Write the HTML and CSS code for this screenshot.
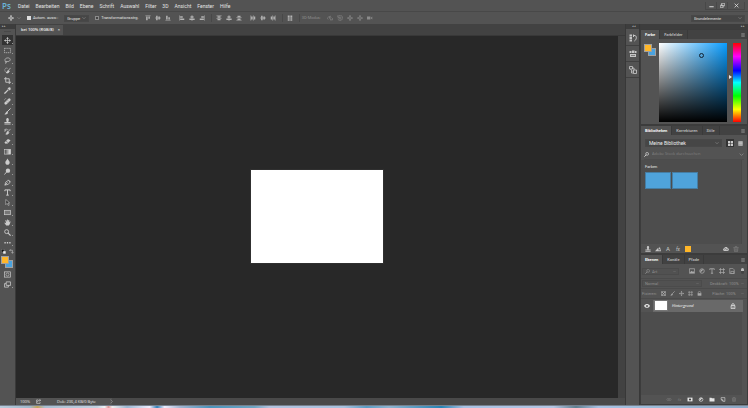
FILE: index.html
```html
<!DOCTYPE html>
<html lang="de">
<head>
<meta charset="utf-8">
<title>Ps</title>
<link rel="stylesheet" href="styles.css">
</head>
<body>
<svg class="sprite" aria-hidden="true">
  <symbol id="move" viewBox="0 0 16 16"><path d="M8 2v12M2 8h12" stroke="currentColor" stroke-width="1.6"/><path d="M8 0l3 4H5zM8 16l3-4H5zM0 8l4-3v6zM16 8l-4-3v6z" fill="currentColor"/></symbol>
  <symbol id="marquee" viewBox="0 0 16 16"><rect x="1" y="3" width="14" height="10" fill="none" stroke="currentColor" stroke-width="1.6" stroke-dasharray="3 1.6"/></symbol>
  <symbol id="lasso" viewBox="0 0 16 16"><path d="M4 10C0 7 3 2 9 2s7 6 2 8c-3 1-5 0-7 0s-2 3 1 2c1 1 0 3-2 3" fill="none" stroke="currentColor" stroke-width="1.6"/></symbol>
  <symbol id="quick" viewBox="0 0 16 16"><path d="M8 3C4 1 1 4 2 8s3 5 6 5" fill="none" stroke="currentColor" stroke-width="1.5" stroke-dasharray="2.5 1.3"/><path d="M15 2l-5 6M10 8c-3 0-2 4-5 5 3 2 7 0 7-4z" fill="currentColor" stroke="currentColor" stroke-width="1.6"/></symbol>
  <symbol id="crop" viewBox="0 0 16 16"><path d="M4 0v12h12M0 4h12v12" fill="none" stroke="currentColor" stroke-width="2"/></symbol>
  <symbol id="dropper" viewBox="0 0 16 16"><path d="M10 6l-7 7-2 2" stroke="currentColor" stroke-width="3"/><path d="M8 3l5 5 2-3c1-3-1-5-4-4z" fill="currentColor"/></symbol>
  <symbol id="heal" viewBox="0 0 16 16"><path d="M4 12l8-8" stroke="currentColor" stroke-width="6" stroke-linecap="round"/><path d="M5 8l3 3M8 5l3 3" stroke="#555" stroke-width="1"/><path d="M1 5c0-2 2-4 4-4" fill="none" stroke="currentColor"/></symbol>
  <symbol id="brush" viewBox="0 0 16 16"><path d="M15 1L7 9" stroke="currentColor" stroke-width="2.2"/><path d="M7 8c-3 0-2 4-6 6 4 2 8-1 8-4z" fill="currentColor"/></symbol>
  <symbol id="stamp" viewBox="0 0 16 16"><path d="M5 4c0-5 6-5 6 0 0 2-1 2-1 5h5v3H1V9h5c0-3-1-3-1-5zM1 13h14v2H1z" fill="currentColor"/></symbol>
  <symbol id="history" viewBox="0 0 16 16"><path d="M15 2L9 9M9 8c-3 0-2 4-5 6 4 1 7-1 7-4z" fill="currentColor" stroke="currentColor" stroke-width="1.6"/><path d="M2 9V4h8M5 7L2 4l3-3" fill="none" stroke="currentColor" stroke-width="1.4"/></symbol>
  <symbol id="eraser" viewBox="0 0 16 16"><path d="M9 2l6 3-7 8H3l-2-3z" fill="currentColor"/><path d="M4 7l6 4M3 14h12" stroke="#555" stroke-width="1.2"/></symbol>
  <symbol id="gradient" viewBox="0 0 16 16"><defs><linearGradient id="gr"><stop stop-color="#444"/><stop offset="1" stop-color="#eee"/></linearGradient></defs><rect x="1" y="3" width="14" height="11" fill="url(#gr)" stroke="currentColor" stroke-width="1.4"/></symbol>
  <symbol id="drop" viewBox="0 0 16 16"><path d="M8 1c2 4 5 6 5 9 0 7-10 7-10 0 0-3 3-5 5-9z" fill="currentColor"/></symbol>
  <symbol id="dodge" viewBox="0 0 16 16"><circle cx="9" cy="6" r="5" fill="currentColor"/><path d="M6 9l-5 6" stroke="currentColor" stroke-width="2"/></symbol>
  <symbol id="pen" viewBox="0 0 16 16"><path d="M2 14L4 7l6-4 4 4-4 5zM2 14l6-6M10 2l5 5" fill="none" stroke="currentColor" stroke-width="1.8"/></symbol>
  <symbol id="type" viewBox="0 0 16 16"><path d="M2 5V2h12v3M8 2v12M5 14h6" fill="none" stroke="currentColor" stroke-width="2.2"/></symbol>
  <symbol id="pointer" viewBox="0 0 16 16"><path d="M4 1v12l3-3 3 5 2-1-3-5h4z" fill="#333" stroke="currentColor" stroke-width="1.3"/></symbol>
  <symbol id="shape" viewBox="0 0 16 16"><rect x="1" y="3" width="14" height="10" fill="#777" stroke="currentColor" stroke-width="1.6"/></symbol>
  <symbol id="hand" viewBox="0 0 16 16"><path d="M5 15L1 9l1-1 3 2-2-7 2-1 2 5V1h2v6l1-5h2v6l2-3 1 1-2 6-2 3z" fill="currentColor"/></symbol>
  <symbol id="zoom" viewBox="0 0 16 16"><circle cx="6" cy="6" r="4.5" fill="none" stroke="currentColor" stroke-width="2"/><path d="M9 9l6 6" stroke="currentColor" stroke-width="2.6"/></symbol>
  <symbol id="dots" viewBox="0 0 16 16"><path d="M1 7h3v3H1zM6.500 7h3v3h-3zM12 7h3v3h-3z" fill="currentColor"/></symbol>
  <symbol id="mask" viewBox="0 0 16 16"><rect x="1" y="2" width="14" height="12" fill="none" stroke="currentColor" stroke-width="1.6"/><circle cx="8" cy="8" r="3.500" fill="none" stroke="currentColor" stroke-width="1.4"/></symbol>
  <symbol id="screens" viewBox="0 0 16 16"><path d="M5 2h10v8H5zM5 6H1v8h9v-4" fill="none" stroke="currentColor" stroke-width="1.8"/></symbol>
  <symbol id="chevron" viewBox="0 0 16 16"><path d="M2 5l6 6 6-6" fill="none" stroke="currentColor" stroke-width="2.4"/></symbol>
  <symbol id="al-top" viewBox="0 0 16 16"><path d="M1 2h14" stroke="currentColor" stroke-width="1.6"/><path d="M3 4h4v10H3zM9 4h4v6H9z" fill="currentColor"/></symbol>
  <symbol id="al-mid" viewBox="0 0 16 16"><path d="M0 8h16" stroke="currentColor" stroke-width="1.6"/><path d="M3 2h4v12H3zM9 4h4v8H9z" fill="currentColor"/></symbol>
  <symbol id="al-side" viewBox="0 0 16 16"><path d="M1 1v14" stroke="currentColor" stroke-width="1.6"/><path d="M3 3h7v4H3zM3 9h11v4H3z" fill="currentColor"/></symbol>
  <symbol id="al-center" viewBox="0 0 16 16"><path d="M8 0v16" stroke="currentColor" stroke-width="1.6"/><path d="M4 3h8v4H4zM1 9h14v4H1z" fill="currentColor"/></symbol>
  <symbol id="dist-h" viewBox="0 0 16 16"><path d="M2 1v14M9 1v14" stroke="currentColor" stroke-width="1.6"/><path d="M3 4h4v8H3zM10 4h4v8h-4z" fill="currentColor"/></symbol>
  <symbol id="dist-v" viewBox="0 0 16 16"><path d="M1 2h14M1 9h14" stroke="currentColor" stroke-width="1.6"/><path d="M4 3h8v4H4zM4 10h8v4H4z" fill="currentColor"/></symbol>
  <symbol id="grid" viewBox="0 0 16 16"><path d="M2 1h5v4H2zM9 1h5v4H9zM2 6h5v4H2zM9 6h5v4H9zM2 11h5v4H2zM9 11h5v4H9z" fill="currentColor"/></symbol>
  <symbol id="tiles" viewBox="0 0 16 16"><path d="M0 0h7v7H0zM9 0h7v7H9zM0 9h7v7H0zM9 9h7v7H9z" fill="currentColor"/></symbol>
  <symbol id="list" viewBox="0 0 16 16"><path d="M1 1h14v14H1z" fill="currentColor"/><path d="M1 6h14M1 11h14" stroke="#777" stroke-width="1.400"/></symbol>
  <symbol id="orbit" viewBox="0 0 16 16"><path d="M3 12C-1 8 3 4 8 5l4 2M10 3a4 4 0 1 0 1 8M8 13h7V8" fill="none" stroke="currentColor" stroke-width="1.6"/></symbol>
  <symbol id="roll" viewBox="0 0 16 16"><path d="M3 3a7 7 0 1 1-1 8M2 1v5h4" fill="none" stroke="currentColor" stroke-width="1.5"/><circle cx="8" cy="8" r="3" fill="none" stroke="currentColor" stroke-width="1.5"/></symbol>
  <symbol id="camera" viewBox="0 0 16 16"><path d="M0 4h9v8H0zM10 8l4-4v8z" fill="currentColor"/></symbol>
  <symbol id="versions" viewBox="0 0 16 16"><path d="M1 1h5v4H1zM1 6h5v4H1zM1 11h5v4H1z" fill="currentColor"/><path d="M9 3h3c5 2 2 9-1 11M9 1v5" fill="none" stroke="currentColor" stroke-width="2"/></symbol>
  <symbol id="props" viewBox="0 0 16 16"><path d="M1 2h4v4H1zM6 1h5v5H6zM12 2h3v4h-3zM2 8h12v6H2z" fill="currentColor"/><path d="M4 11h8" stroke="#555" stroke-width="1.3"/></symbol>
  <symbol id="clone" viewBox="0 0 16 16"><path d="M1 1h6v5H1zM3 6l4 5M9 8h6v7H9zM6 4h4v4M5 9v5h4" fill="none" stroke="currentColor" stroke-width="1.7"/></symbol>
  <symbol id="menu" viewBox="0 0 16 16"><path d="M1 3h14M1 8h14M1 13h14" stroke="currentColor" stroke-width="2"/></symbol>
  <symbol id="image" viewBox="0 0 16 16"><path d="M1 2h14v12H1z" fill="none" stroke="currentColor" stroke-width="2"/><path d="M2 13l4-6 3 3 2-2 4 5z" fill="currentColor"/></symbol>
  <symbol id="adjust" viewBox="0 0 16 16"><circle cx="8" cy="8" r="6" fill="none" stroke="currentColor" stroke-width="2"/><path d="M4 12L12 4a6 6 0 0 0-8 8z" fill="currentColor"/></symbol>
  <symbol id="vector" viewBox="0 0 16 16"><path d="M4 0v16M12 0v16M0 4h16M0 12h16" stroke="currentColor" stroke-width="1.8"/></symbol>
  <symbol id="smart" viewBox="0 0 16 16"><path d="M2 1h8l4 4v10H2zM5 9h8v6H5z" fill="none" stroke="currentColor" stroke-width="1.8"/></symbol>
  <symbol id="checker" viewBox="0 0 16 16"><path d="M1 1h14v14H1z" fill="none" stroke="currentColor" stroke-width="2"/><path d="M2 2h4v4H2zM10 2h4v4h-4zM6 6h4v4H6zM2 10h4v4H2zM10 10h4v4h-4z" fill="currentColor"/></symbol>
  <symbol id="lock" viewBox="0 0 16 16"><path d="M2 7h12v8H2z" fill="currentColor"/><path d="M4 8V5c0-5 8-5 8 0v3" fill="none" stroke="currentColor" stroke-width="2"/></symbol>
  <symbol id="lock-line" viewBox="0 0 16 16"><path d="M3 7h10v8H3zM5 7V4c0-3 6-3 6 0v3M8 10v3" fill="none" stroke="currentColor" stroke-width="1.8"/></symbol>
  <symbol id="eye" viewBox="0 0 16 16"><path d="M0 8c4-7 12-7 16 0-4 7-12 7-16 0z" fill="currentColor"/><circle cx="8" cy="8" r="3" fill="#555"/><circle cx="8" cy="8" r="1.200" fill="currentColor"/></symbol>
  <symbol id="link" viewBox="0 0 16 16"><rect x="1" y="5" width="8" height="6" rx="3" fill="none" stroke="currentColor" stroke-width="1.6"/><rect x="7" y="5" width="8" height="6" rx="3" fill="none" stroke="currentColor" stroke-width="1.6"/></symbol>
  <symbol id="addmask" viewBox="0 0 16 16"><path d="M0 2h16v12H0z" fill="currentColor"/><circle cx="8" cy="8" r="3.500" fill="#444"/></symbol>
  <symbol id="folder" viewBox="0 0 16 16"><path d="M0 2h6l2 2h8v10H0z" fill="currentColor"/></symbol>
  <symbol id="page" viewBox="0 0 16 16"><path d="M2 2h12v12H9L2 8zM2 9h6v5" fill="none" stroke="currentColor" stroke-width="1.800"/></symbol>
  <symbol id="trash" viewBox="0 0 16 16"><path d="M1 4h14M6 3V1h4v2M3 5l1 10h8l1-10M6 6v7M10 6v7" fill="none" stroke="currentColor" stroke-width="1.700"/></symbol>
  <symbol id="cloud" viewBox="0 0 16 16"><path d="M4 13c-5 0-5-6-1-7C5 1 12 2 12 5c5 1 5 8 0 8z" fill="currentColor"/><path d="M5 10c-2-3 2-5 4-1s4 0 2-2" fill="none" stroke="#555" stroke-width="1.400"/></symbol>
  <symbol id="graphic" viewBox="0 0 16 16"><path d="M0 14l6-7 3-3v5l4-7 3 12z" fill="currentColor"/><circle cx="11" cy="10" r="2" fill="#555"/></symbol>
  <symbol id="export" viewBox="0 0 16 16"><path d="M7 3H2v11h11v-4M5 10c0-5 4-6 9-6M11 1l4 3-4 3" fill="none" stroke="currentColor" stroke-width="1.800"/></symbol>
</svg>

<div class="app">
  <header class="menubar">
    <span class="logo">Ps</span>
    <nav class="menus">
      <button>Datei</button><button>Bearbeiten</button><button>Bild</button><button>Ebene</button><button>Schrift</button><button>Auswahl</button><button>Filter</button><button>3D</button><button>Ansicht</button><button>Fenster</button><button>Hilfe</button>
    </nav>
    <div class="window-buttons">
      <button aria-label="Minimieren"><svg viewBox="0 0 16 16"><path d="M1 12h14" stroke="currentColor" stroke-width="3"/></svg></button>
      <button aria-label="Verkleinern"><svg viewBox="0 0 16 16"><path d="M5 1h10v8H5zM1 7h9v8H1z" fill="none" stroke="currentColor" stroke-width="2"/></svg></button>
      <button aria-label="Schließen"><svg viewBox="0 0 16 16"><path d="M2 2l12 12M14 2L2 14" stroke="currentColor" stroke-width="2.400"/></svg></button>
    </div>
  </header>

  <div class="options">
    <svg class="icon bright"><use href="#move"/></svg>
    <svg class="chev"><use href="#chevron"/></svg>
    <label class="check"><input type="checkbox" checked>Autom. ausw.:</label>
    <span class="drop group-drop"><select aria-label="Auswahlziel"><option>Gruppe</option></select><svg class="chev"><use href="#chevron"/></svg></span>
    <label class="check"><input type="checkbox">Transformationsstrg.</label>
    <div class="tools-row">
      <button aria-label="Oben"><svg><use href="#al-top"/></svg></button><button aria-label="Mitte"><svg><use href="#al-mid"/></svg></button><button aria-label="Unten"><svg class="flip"><use href="#al-top"/></svg></button>
    </div>
    <div class="tools-row">
      <button aria-label="Links"><svg><use href="#al-side"/></svg></button><button aria-label="Zentriert"><svg><use href="#al-center"/></svg></button><button aria-label="Rechts"><svg class="turn"><use href="#al-side"/></svg></button>
    </div>
    <div class="tools-row ruled">
      <button aria-label="Oben verteilen"><svg><use href="#dist-v"/></svg></button><button aria-label="Mitte verteilen"><svg><use href="#al-center"/></svg></button><button aria-label="Unten verteilen"><svg class="flip"><use href="#dist-v"/></svg></button>
    </div>
    <div class="tools-row">
      <button aria-label="Links verteilen"><svg><use href="#dist-h"/></svg></button><button aria-label="Horizontal verteilen"><svg><use href="#al-mid"/></svg></button><button aria-label="Rechts verteilen"><svg class="turn"><use href="#dist-h"/></svg></button>
    </div>
    <div class="tools-row ruled"><button aria-label="Automatisch"><svg><use href="#grid"/></svg></button></div>
    <div class="tools-row ruled mode">
      <span>3D-Modus:</span>
      <button aria-label="Drehen"><svg><use href="#orbit"/></svg></button><button aria-label="Rollen"><svg><use href="#roll"/></svg></button><button aria-label="Ziehen"><svg><use href="#move"/></svg></button><button aria-label="Verschieben"><svg><use href="#move"/></svg></button><button aria-label="Kamera"><svg><use href="#camera"/></svg></button>
    </div>
    <span class="drop workspace"><select aria-label="Arbeitsbereich"><option>Grundelemente</option></select><svg class="chev"><use href="#chevron"/></svg></span>
  </div>

  <main class="body">
    <aside class="toolbox">
      <div class="strip left">▸▸</div>
      <div class="tool-list">
        <div class="grip"></div>
        <div class="tool-group">
          <button class="active" aria-label="Verschieben"><svg><use href="#move"/></svg></button>
          <button aria-label="Auswahlrechteck"><svg><use href="#marquee"/></svg></button>
          <button aria-label="Lasso"><svg><use href="#lasso"/></svg></button>
          <button aria-label="Schnellauswahl"><svg><use href="#quick"/></svg></button>
          <button aria-label="Freistellen"><svg><use href="#crop"/></svg></button>
          <button aria-label="Pipette"><svg><use href="#dropper"/></svg></button>
        </div>
        <div class="tool-group">
          <button aria-label="Reparaturpinsel"><svg><use href="#heal"/></svg></button>
          <button aria-label="Pinsel"><svg><use href="#brush"/></svg></button>
          <button aria-label="Kopierstempel"><svg><use href="#stamp"/></svg></button>
          <button aria-label="Protokollpinsel"><svg><use href="#history"/></svg></button>
          <button aria-label="Radiergummi"><svg><use href="#eraser"/></svg></button>
          <button aria-label="Verlauf"><svg><use href="#gradient"/></svg></button>
          <button aria-label="Weichzeichner"><svg><use href="#drop"/></svg></button>
          <button aria-label="Abwedler"><svg><use href="#dodge"/></svg></button>
        </div>
        <div class="tool-group">
          <button aria-label="Zeichenstift"><svg><use href="#pen"/></svg></button>
          <button aria-label="Text"><svg><use href="#type"/></svg></button>
          <button aria-label="Pfadauswahl"><svg><use href="#pointer"/></svg></button>
          <button aria-label="Rechteck"><svg><use href="#shape"/></svg></button>
          <button aria-label="Hand"><svg><use href="#hand"/></svg></button>
          <button aria-label="Zoom"><svg><use href="#zoom"/></svg></button>
          <button aria-label="Mehr"><svg><use href="#dots"/></svg></button>
        </div>
        <div class="swap">
          <svg viewBox="0 0 16 16"><path d="M1 1h9v9H1z" fill="#111" stroke="#ccc"/><path d="M7 7h8v8H7z" fill="#eee"/></svg>
          <svg viewBox="0 0 16 16"><path d="M2 4h9v9M5 1L2 4l3 3M8 10l3 4 3-4" fill="none" stroke="#bbb" stroke-width="2"/></svg>
        </div>
        <div class="colors"><span class="back"></span><span class="front"></span></div>
        <div class="tool-group">
          <button class="plain" aria-label="Maskierungsmodus"><svg><use href="#mask"/></svg></button>
          <button aria-label="Bildschirmmodus"><svg><use href="#screens"/></svg></button>
        </div>
      </div>
    </aside>

    <section class="workspace-area">
      <div class="doc-tabs"><div class="doc-tab">bei 100% (RGB/8)<button aria-label="Tab schließen">×</button></div></div>
      <div class="stage"><div class="artboard"></div></div>
      <footer class="status"><span class="percent">100%</span><svg><use href="#export"/></svg><span class="docsize">Dok: 236,4 KB/0 Byte</span><svg class="chev next"><use href="#chevron"/></svg></footer>
    </section>

    <aside class="dock">
      <div class="strip">◂◂</div>
      <div class="dock-list">
        <button aria-label="Protokoll"><svg><use href="#versions"/></svg></button>
        <button aria-label="Eigenschaften"><svg><use href="#props"/></svg></button>
        <button aria-label="Kopierquelle"><svg><use href="#clone"/></svg></button>
      </div>
    </aside>

    <aside class="panels">
      <div class="strip">▸▸</div>
      <section class="panel">
        <div class="tabs"><button class="on">Farbe</button><button>Farbfelder</button><svg><use href="#menu"/></svg></div>
        <div class="picker">
          <div class="colors"><span class="back"></span><span class="front"></span></div>
          <div class="field"><span class="ring"></span></div>
          <div class="hue"><span class="pin"></span></div>
        </div>
      </section>
      <section class="panel library">
        <div class="tabs"><button class="on">Bibliotheken</button><button>Korrekturen</button><button>Stile</button><svg><use href="#menu"/></svg></div>
        <div class="lib-top">
          <span class="drop"><select aria-label="Bibliothek"><option>Meine Bibliothek</option></select><svg class="chev"><use href="#chevron"/></svg></span>
          <button class="view on" aria-label="Raster"><svg><use href="#tiles"/></svg></button>
          <button class="view" aria-label="Liste"><svg><use href="#list"/></svg></button>
        </div>
        <div class="lib-search"><svg class="turn"><use href="#zoom"/></svg><input type="text" aria-label="Suche" placeholder="Adobe Stock durchsuchen"><svg class="chev"><use href="#chevron"/></svg></div>
        <div class="lib-body">
          <h2>Farben</h2>
          <div class="chips"><span></span><span></span></div>
        </div>
        <div class="lib-foot">
          <svg><use href="#stamp"/></svg><svg><use href="#graphic"/></svg><span>A</span><i>fx</i><b class="orange"></b>
          <svg class="end"><use href="#cloud"/></svg><svg class="dim"><use href="#trash"/></svg>
        </div>
      </section>
      <section class="panel layers">
        <div class="tabs"><button class="on">Ebenen</button><button>Kanäle</button><button>Pfade</button><svg><use href="#menu"/></svg></div>
        <div class="row filter">
          <span class="drop kind"><svg class="turn"><use href="#zoom"/></svg><select aria-label="Filter"><option>Art</option></select><svg class="chev"><use href="#chevron"/></svg></span>
          <svg><use href="#image"/></svg><svg><use href="#adjust"/></svg><svg><use href="#type"/></svg><svg><use href="#vector"/></svg><svg><use href="#smart"/></svg><span class="switch"></span>
        </div>
        <div class="row blend">
          <span class="drop"><select aria-label="Füllmethode" disabled><option>Normal</option></select><svg class="chev"><use href="#chevron"/></svg></span>
          <label>Deckkraft: <input type="text" value="100%" disabled></label><svg class="chev"><use href="#chevron"/></svg>
        </div>
        <div class="row locks">
          <span>Fixieren:</span><svg><use href="#checker"/></svg><svg><use href="#brush"/></svg><svg><use href="#move"/></svg><svg><use href="#vector"/></svg><svg><use href="#lock"/></svg>
          <label>Fläche: <input type="text" value="100%" disabled></label><svg class="chev"><use href="#chevron"/></svg>
        </div>
        <div class="layer"><svg class="eye"><use href="#eye"/></svg><div class="layer-main"><span class="thumb"></span><em>Hintergrund</em><svg><use href="#lock-line"/></svg></div></div>
        <div class="layer-space"></div>
        <div class="layer-foot">
          <svg class="dim"><use href="#link"/></svg><i class="dim">fx</i><svg><use href="#addmask"/></svg><svg><use href="#adjust"/></svg><svg><use href="#folder"/></svg><svg><use href="#page"/></svg><svg class="dim"><use href="#trash"/></svg>
        </div>
      </section>
    </aside>
  </main>
  <div class="taskbar"></div>
</div>
</body>
</html>
```
FILE: styles.css
```css
* { box-sizing: border-box; }
html, body { height: 100%; margin: 0; }
body {
  overflow: hidden;
  background: #424242;
  color: #e4e4e4;
  font: 5px/6px Roboto, "Liberation Sans", sans-serif;
}
button, select, input {
  appearance: none;
  margin: 0;
  padding: 0;
  border: 0;
  border-radius: 0;
  background: none;
  color: inherit;
  font: inherit;
}
select, input { min-width: 0; }
select:disabled, input:disabled { opacity: 1; }
svg { display: block; flex: none; width: 6px; height: 6px; }
.sprite { position: absolute; width: 0; height: 0; }
.flip { transform: scaleY(-1); }
.turn { transform: scaleX(-1); }
svg.chev { width: 4px; height: 4px; color: #909090; }
.dim { color: #808080; }

.app { display: flex; flex-direction: column; height: 100%; }

.menubar {
  display: flex;
  align-items: center;
  flex: none;
  height: 12px;
  padding: 0 3px 0 2px;
  border-bottom: 1px solid #484848;
  background: #535353;
}
.logo { width: 13px; color: #6bb5dc; font: 600 8px/10px "Open Sans", sans-serif; }
.menus { display: flex; gap: 6px; padding-left: 3px; }
.window-buttons { display: flex; margin-left: auto; }
.window-buttons button {
  display: grid;
  place-items: center;
  width: 11px;
  height: 8px;
  border: solid #484848;
  border-width: 0 0 1px 1px;
}
.window-buttons button:last-child { width: 18px; border-right-width: 1px; }
.window-buttons svg { width: 5px; height: 5px; }

.options {
  display: flex;
  align-items: center;
  flex: none;
  height: 12px;
  padding: 0 3px 0 8px;
  background: #535353;
  font-size: 4px;
}
.bright { color: #ddd; }
.options > .chev { margin: 0 6px 0 3px; }
.check { display: flex; align-items: center; gap: 2px; white-space: nowrap; }
.check input { width: 4px; height: 4px; border: 1px solid #8b8b8b; background: #444; }
.check input:checked { background: #ddd; border-color: #ddd; }
.drop {
  display: flex;
  align-items: center;
  height: 7px;
  padding: 0 2px;
  border: 1px solid #484848;
  background: #464646;
}
.drop select { flex: 1; height: 5px; line-height: 5px; }
.group-drop { width: 25px; margin: 0 6px; }
.tools-row { display: flex; align-items: center; margin-left: 4px; color: #b4b4b4; }
.tools-row button { display: grid; place-items: center; width: 10px; height: 8px; }
.tools-row.ruled { padding-left: 2px; border-left: 1px solid #484848; }
.tools-row.mode { color: #8c8c8c; }
.mode span { width: 23px; }
.workspace { width: 54px; margin-left: auto; }

.body { display: flex; flex: 1; min-height: 0; }
.strip {
  flex: none;
  height: 5px;
  padding-right: 3px;
  background: #3d3d3d;
  color: #bbb;
  font-size: 3px;
  line-height: 5px;
  text-align: right;
}
.strip.left { padding-left: 2px; text-align: left; }

.toolbox, .dock { display: flex; flex-direction: column; flex: none; }
.toolbox { width: 16px; border-right: 1px solid #3a3a3a; }
.tool-list { flex: 1; background: #535353; }
.grip { height: 2px; margin: 2px 4px 2px; border-top: 1px solid #484848; }
.tool-group { padding-bottom: 1px; }
.tool-group button {
  display: grid;
  place-items: center;
  position: relative;
  width: 11px;
  height: 10px;
  margin-left: 2px;
  color: #ccc;
}
.tool-group svg { width: 7px; height: 7px; }
.tool-group button::after {
  content: "";
  position: absolute;
  right: 0;
  bottom: 1px;
  width: 1px;
  height: 1px;
  background: #999;
}
.tool-group button.active { background: #333; }
.tool-group button.plain::after { display: none; }
.swap { display: flex; gap: 3px; padding: 1px 1px 2px; }
.swap svg { width: 5px; height: 5px; }
.colors { position: relative; width: 12px; height: 13px; margin-left: 1px; }
.colors span { position: absolute; width: 8px; height: 8px; border: 1px solid #a0a0a0; }
.colors .front { left: 0; top: 0; background: #ffb628; }
.colors .back { right: 0; bottom: 1px; background: #4aa3df; }

.workspace-area { display: flex; flex: 1; flex-direction: column; min-width: 0; }
.doc-tabs { display: flex; flex: none; height: 12px; padding-top: 1px; border-bottom: 1px solid #383838; }
.doc-tab {
  display: flex;
  align-items: center;
  gap: 4px;
  padding: 0 3px 0 5px;
  background: #535353;
  color: #f0f0f0;
  font: 600 4px/6px "Open Sans", sans-serif;
}
.stage {
  display: grid;
  place-items: center;
  flex: 1;
  margin-right: 7px;
  padding: 0 1px 2px 0;
  background: #282828;
}
.artboard { width: 132px; height: 93px; background: #fff; outline: 1px solid #303030; }
.status {
  display: flex;
  align-items: center;
  flex: none;
  height: 7px;
  padding-left: 4px;
  background: linear-gradient(90deg, #535353 96px, #494949 96px);
  font: 4px/6px "Open Sans", sans-serif;
}
.status svg { width: 5px; height: 5px; }
.percent { width: 16px; }
.docsize { width: 53px; margin-left: 16px; }
.status .next { margin-left: -1px; transform: rotate(-90deg); }

.dock { width: 15px; border: solid #383838; border-width: 0 1px; }
.dock-list { flex: 1; padding-top: 1px; background: #535353; }
.dock-list button {
  display: grid;
  place-items: center;
  width: 100%;
  height: 16px;
  padding-top: 1px;
  border-bottom: 1px solid #404040;
  color: #c5c5c5;
}
.dock-list svg { width: 8px; height: 8px; }

.panels { display: flex; flex-direction: column; flex: none; width: 108px; padding-left: 1px; background: #3c3c3c; }
.panel { flex: none; margin: 1px 1px 1px 0; background: #535353; font-size: 4px; }
.tabs { display: flex; align-items: center; height: 9px; background: #424242; }
.tabs button { height: 9px; padding: 0 4px; border-right: 1px solid #3a3a3a; color: #bbb; font-weight: 600; }
.tabs button.on { background: #535353; color: #fff; }
.tabs svg { width: 4px; height: 4px; margin: 0 2px 0 auto; color: #bbb; }

.picker { display: flex; padding: 4px 6px 2px 3px; }
.picker .colors { margin: 1px 3px 0 0; }
.field {
  position: relative;
  flex: 1;
  height: 79px;
  background: linear-gradient(0deg, #000, transparent), linear-gradient(90deg, #fff, #0a9dff);
}
.ring { position: absolute; left: 59%; top: 13%; width: 5px; height: 5px; border: 1px solid #123; border-radius: 50%; }
.hue {
  position: relative;
  width: 8px;
  margin-left: 6px;
  background: linear-gradient(#f00, #f0f 17%, #00f 35%, #0ff 50%, #0f0 67%, #ff0 84%, #f00);
}
.pin { position: absolute; left: -4px; top: 32px; border: solid transparent; border-width: 2px 0 2px 3px; border-left-color: #eee; }

.library { display: flex; flex-direction: column; height: 127px; }
.lib-top { display: flex; align-items: center; gap: 2px; padding: 4px 3px 2px 4px; font-size: 5px; }
.lib-top .drop { flex: 1; height: 8px; margin-right: 2px; padding-left: 3px; color: #eee; }
.view { display: grid; place-items: center; width: 8px; height: 8px; color: #ccc; }
.view.on { background: #333; }
.view svg { width: 5px; height: 5px; }
.lib-search { display: flex; align-items: center; height: 11px; margin: 0 3px; border-bottom: 1px solid #4c4c4c; }
.lib-search svg { width: 5px; height: 5px; }
.lib-search input { flex: 1; padding-left: 3px; height: 6px; font-family: "Open Sans", sans-serif; }
.lib-search input::placeholder { color: #808080; opacity: 1; }
.lib-body { flex: 1; margin-right: 5px; padding: 2px 4px; border-right: 1px solid #484848; background: #4d4d4d; }
.lib-body h2 { margin: 2px 0 2px; font: inherit; }
.chips { display: flex; gap: 1px; }
.chips span { width: 26px; height: 17px; border: 1px solid #467da3; background: #4fa3db; }
.lib-foot { display: flex; align-items: center; gap: 4px; height: 9px; padding: 0 8px 0 4px; color: #c5c5c5; font-size: 6px; }
.lib-foot span, .lib-foot i { width: 6px; text-align: center; }
.lib-foot i { font-size: 5px; }
.orange { width: 6px; height: 6px; background: #ffb628; }
.lib-foot .end { margin-left: auto; }

.layers { display: flex; flex: 1; flex-direction: column; min-height: 0; margin-bottom: 1px; }
.row { display: flex; align-items: center; gap: 4px; height: 10px; padding: 0 3px 0 1px; border-bottom: 1px solid #4b4b4b; color: #909090; }
.row .drop { border-color: #4b4b4b; background: #515151; }
.row input { width: 11px; }
.row label { margin-left: auto; }
.row svg { width: 5px; height: 5px; }
.row svg.chev { width: 3px; height: 3px; color: #808080; }
.filter { height: 15px; color: #aaa; }
.filter .kind { width: 37px; margin-right: 6px; gap: 2px; color: #909090; }
.filter > svg { width: 6px; height: 6px; }
.switch { width: 3px; height: 6px; margin-left: auto; border-radius: 2px; background: linear-gradient(#bbb 50%, #444 50%); }
.blend { gap: 1px; }
.blend .drop { width: 60px; }
.locks { gap: 4px; }
.locks svg { color: #aaa; }
.layer { display: flex; align-items: center; height: 13px; }
.eye { margin: 0 3px 0 3px; color: #ddd; }
.layer-main {
  display: flex;
  align-items: center;
  gap: 5px;
  flex: 1;
  height: 12px;
  margin-right: 4px;
  padding: 0 7px 0 2px;
  background: #696969;
  color: #fff;
  font-family: "Open Sans", sans-serif;
}
.layer-main svg { margin-left: auto; }
.thumb { width: 12px; height: 9px; background: #fff; outline: 1px solid #777; }
.layer-space { flex: 1; margin-right: 5px; background: #4d4d4d; }
.layer-foot { display: flex; align-items: center; justify-content: flex-end; gap: 5px; height: 9px; padding-right: 10px; }
.layer-foot svg { width: 6px; height: 5px; }
.layer-foot i { width: 5px; text-align: center; }

.taskbar {
  flex: none;
  height: 3px;
  border-top: 1px solid #77818d;
  background: linear-gradient(90deg, #b8cbdc, #9fb9cc 4%, #c3a45a 5%, #a8bfd2 6%, #c4d3e2 13%, #f0f2f5 14%, #d99 14.5%, #eee 15%, #9bb8d4 17%, #eef 20%, #3180b8 21%, #eef 22%, #a3b6d2 24%, #4a93bb 28%, #6ea5c3 34%, #b3c3df 36%, #a8c2df 46%, #5a9cc4 49%, #8fb4d0 52%, #2683b4 59%, #a9c2e4 62%, #b4c6e4 74%, #5f7f90 77%, #a8c2e4 80%, #9bbbd8 88%, #89a5c3);
}
```
